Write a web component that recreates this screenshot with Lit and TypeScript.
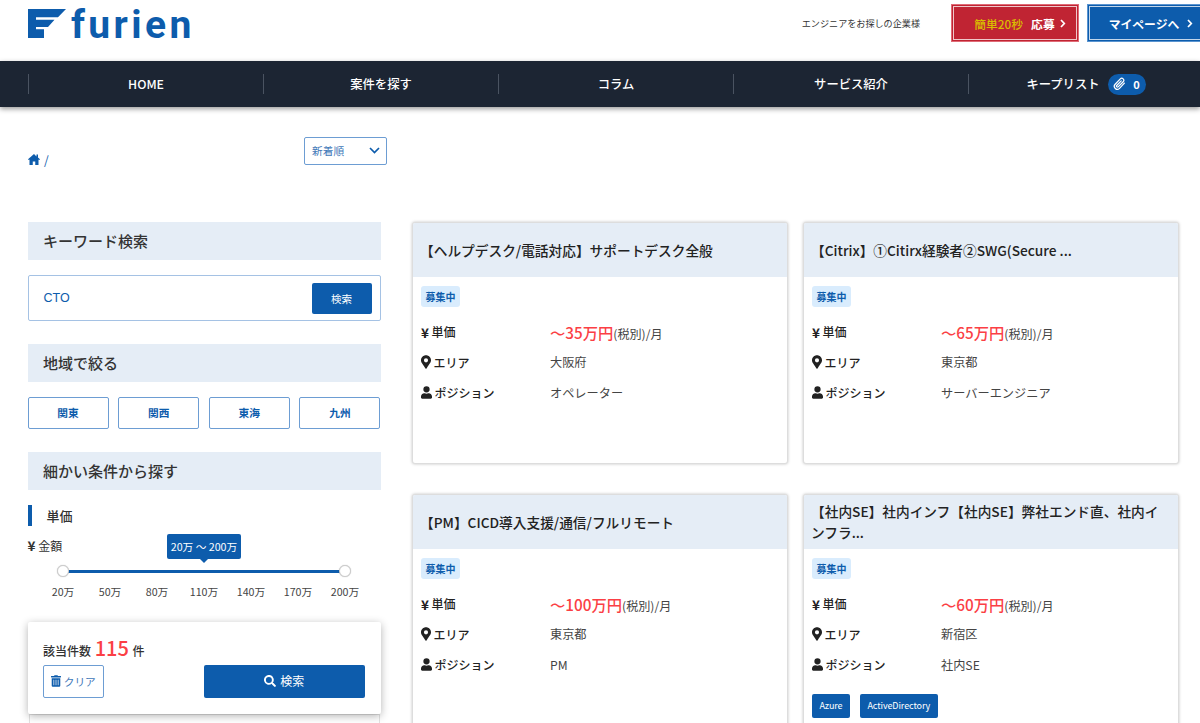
import { LitElement, html, css } from "lit";
import { customElement } from "lit/decorators.js";

const pin = html`<svg class="ic" viewBox="0 0 384 512" width="10" height="14"><path fill="currentColor" d="M172 502C27 291 0 266 0 192 0 86 86 0 192 0s192 86 192 192c0 74-27 99-172 310-10 14-30 14-40 0zm20-230a80 80 0 1 0 0-160 80 80 0 0 0 0 160z"/></svg>`;
const user = html`<svg class="ic" viewBox="0 0 448 512" width="11" height="13"><path fill="currentColor" d="M224 256a128 128 0 1 0 0-256 128 128 0 0 0 0 256zm90 32h-17a174 174 0 0 1-146 0h-17C60 288 0 348 0 422v42c0 26 22 48 48 48h352c26 0 48-22 48-48v-42c0-74-60-134-134-134z"/></svg>`;
const clip = html`<svg viewBox="0 0 24 24" width="13" height="14" fill="none" stroke="#fff" stroke-width="2.3" stroke-linecap="round"><path d="M21 10.5l-9 9.5a5.5 5.5 0 0 1-8-7.6l9.5-9.8a3.7 3.7 0 0 1 5.3 5.2l-9.3 9.6a1.8 1.8 0 0 1-2.6-2.6l8.3-8.6"/></svg>`;
const trash = html`<svg viewBox="0 0 448 512" width="10" height="12"><path fill="currentColor" d="M32 464a48 48 0 0 0 48 48h288a48 48 0 0 0 48-48V128H32zm272-256a16 16 0 0 1 32 0v224a16 16 0 0 1-32 0zm-96 0a16 16 0 0 1 32 0v224a16 16 0 0 1-32 0zm-96 0a16 16 0 0 1 32 0v224a16 16 0 0 1-32 0zM432 32H312l-9-19a24 24 0 0 0-22-13H167a24 24 0 0 0-21 13l-9 19H16A16 16 0 0 0 0 48v32a16 16 0 0 0 16 16h416a16 16 0 0 0 16-16V48a16 16 0 0 0-16-16z"/></svg>`;
const search = html`<svg viewBox="0 0 512 512" width="12" height="12"><path fill="currentColor" d="M505 443l-100-100c-4-4-11-7-17-7h-16a208 208 0 1 0-36 36v16c0 6 3 13 7 17l100 100c9 9 24 9 34 0l28-28c9-10 9-25 0-34zM208 336a128 128 0 1 1 0-256 128 128 0 0 1 0 256z"/></svg>`;
const home = html`<svg viewBox="0 0 24 22" width="12" height="11"><path fill="currentColor" d="M12 0L0 10.5l1.4 1.6L3 10.8V22h6.5v-7h5v7H21V10.8l1.6 1.3 1.4-1.6-4-3.5V1h-3v3.8z"/></svg>`;
const chev = html`<svg class="chev" width="6" height="9" viewBox="0 0 6 9" fill="none" stroke="#fff" stroke-width="1.7"><path d="M1 1l3.3 3.5L1 8"/></svg>`;

interface Job { title: string; price: string; area: string; pos: string; tags?: string[]; }
const jobs: Job[] = [
  { title: "【ヘルプデスク/電話対応】サポートデスク全般", price: "〜35万円", area: "大阪府", pos: "オペレーター" },
  { title: "【Citrix】①Citirx経験者②SWG(Secure ...", price: "〜65万円", area: "東京都", pos: "サーバーエンジニア" },
  { title: "【PM】CICD導入支援/通信/フルリモート", price: "〜100万円", area: "東京都", pos: "PM" },
  { title: "【社内SE】社内インフ【社内SE】弊社エンド直、社内インフラ...", price: "〜60万円", area: "新宿区", pos: "社内SE", tags: ["Azure", "ActiveDirectory"] },
];

@customElement("app-root")
export class AppRoot extends LitElement {
  static styles = css`
    :host { display: block; width: 1200px; height: 723px; overflow: hidden; background: #fff; color: #333;
      font-family: "Noto Sans CJK JP", "Noto Sans", sans-serif; }
    * { box-sizing: border-box; }
    .top { height: 61px; display: flex; align-items: flex-start; padding-left: 28px; }
    .logo { display: flex; align-items: flex-start; margin-top: 3px; height: 40px; }
    .logo svg { margin-top: 6px; flex: none; }
    .logo span { font-family: Roboto, sans-serif; font-weight: 700; font-size: 39px; line-height: 40px; letter-spacing: 3.4px; color: #0d5cac; margin-left: 5px; margin-top: 2px; }
    .find { margin-left: auto; font-size: 9.1px; color: #333; margin-top: 16px; line-height: 14px; }
    .cta { height: 38px; margin-top: 4px; border: 1px solid; display: flex; align-items: center; justify-content: center; font-size: 11.8px; font-weight: 700; color: #fff; position: relative; padding: 2px; }
    .cta i { position: absolute; inset: 1px; border: 1px solid rgba(255,255,255,.75); }
    .red { width: 128px; margin-left: 31px; background: #c02433; border-color: #e06a76; padding-left: 12px; }
    .red b { color: #d9bd00; margin-right: 8px; font-weight: 500; }
    .red .chev { margin-left: 5px; }
    .blue { width: 122px; margin-left: 8px; margin-right: -9px; background: #0d5cac; border-color: #5a94d0; padding-left: 8px; }
    .chev { margin-left: 8px; flex: none; }

    nav { height: 46px; background: #1c2533; padding-left: 28px; display: grid; grid-template-columns: repeat(5, 235px); align-items: center; box-shadow: 0 2px 5px rgba(0,0,0,.4); position: relative; }
    nav a { height: 20px; border-left: 1px solid #4a5361; display: flex; align-items: center; justify-content: center; gap: 8px; color: #fff; font-size: 12.3px; font-weight: 500; }
    .pill { width: 38px; height: 21px; border-radius: 11px; background: #0d5cac; display: flex; align-items: center; justify-content: center; gap: 7px; font-size: 11px; font-weight: 700; }

    .bar { height: 115px; padding: 30px 0 0 28px; display: flex; align-items: flex-start; }
    .crumb { width: 276px; margin-top: 14px; display: flex; align-items: center; gap: 4px; height: 16px; color: #0d5cac; font-size: 12px; }
    .select { width: 83px; height: 28px; border: 1px solid #6d9dd3; border-radius: 2px; display: flex; align-items: center; justify-content: space-between; padding: 0 6px 2px 7px; font-size: 10.7px; color: #3f78b8; }

    .main { display: flex; padding-left: 27.5px; align-items: flex-start; }
    .side { width: 353px; flex: none; }
    h2 { margin: 0; height: 38px; background: #e5edf6; padding: 0 0 2px 15.5px; display: flex; align-items: center; font-size: 15px; font-weight: 500; color: #333; }
    .kw { margin: 15px 0 23px; height: 46px; border: 1px solid #a5c2e4; border-radius: 2px; display: flex; align-items: center; justify-content: space-between; padding: 0 8px 0 15px; font-size: 12.5px; color: #0d5cac; font-family: "Liberation Sans", sans-serif; }
    .kw button, .go { background: #0d5cac; color: #fff; border: 0; border-radius: 2px; font-family: "Noto Sans CJK JP", sans-serif; display: flex; align-items: center; justify-content: center; }
    .kw button { width: 60px; height: 31px; font-size: 10.5px; padding: 0; }
    .regions { display: grid; grid-template-columns: repeat(4, 81px); justify-content: space-between; margin: 15px 0 23px; }
    .regions div { height: 32px; border: 1px solid #6d9dd3; border-radius: 2px; display: flex; align-items: center; justify-content: center; color: #0d5cac; font-size: 10.7px; font-weight: 700; padding-bottom: 2px; }
    .sub { margin-top: 15px; height: 21px; border-left: 4px solid #0d5cac; padding-left: 15px; display: flex; align-items: center; font-size: 13px; font-weight: 500; color: #333; }
    .amount { height: 64px; position: relative; margin-top: 11px; }
    .amt { font-size: 12px; line-height: 16px; color: #333; display: block; }
    .yen { font-size: 13.5px; font-weight: 700; }
    .tip { position: absolute; left: 139.5px; top: -3px; width: 74px; height: 25px; background: #0d5cac; color: #fff; border-radius: 2px; font-size: 10.7px; display: flex; align-items: center; justify-content: center; }
    .tip::after { content: ""; position: absolute; left: 33px; bottom: -4px; border: 4px solid transparent; border-bottom: 0; border-top-color: #0d5cac; }
    .track { position: absolute; left: 35px; width: 282px; top: 33px; height: 3px; background: #0d5cac; }
    .knob { position: absolute; top: -5px; width: 12px; height: 12px; border-radius: 50%; background: #fff; border: 1px solid #ccc; box-shadow: 0 0 1px rgba(0,0,0,.3); }
    .ticks { display: grid; grid-template-columns: repeat(7, 47px); position: absolute; left: 12px; top: 47px; font-size: 10.7px; color: #444; text-align: center; line-height: 16px; }
    .panel { margin-top: 21px; height: 92px; background: #fff; border-radius: 2px; box-shadow: 0 2px 8px rgba(0,0,0,.3); padding: 14px 15.5px 0; position: relative; }
    .count { font-size: 12px; line-height: 23px; height: 29px; color: #333; font-weight: 500; }
    .count b { color: #fb3f45; font-size: 20px; font-weight: 500; margin: 0 1px; }
    .acts { display: flex; justify-content: space-between; }
    .clear { width: 60.5px; height: 33px; border: 1px solid #6d9dd3; border-radius: 2px; display: flex; align-items: center; justify-content: center; gap: 3px; color: #3f78b8; font-size: 10.7px; padding-bottom: 1px; }
    .clear svg { color: #0d5cac; }
    .go { width: 161.5px; height: 33px; font-size: 12px; gap: 4px; padding: 0 0 2px; }
    .rest { height: 20px; margin: 0 1px; border: 1px solid #e2e2e2; }

    .cards { margin-left: 31.5px; display: grid; grid-template-columns: 376px 376px; column-gap: 15px; row-gap: 30px; grid-auto-rows: 242px; }
    .card { border-radius: 3px; border: 1px solid #ddd; box-shadow: 0 0 3px rgba(0,0,0,.25); overflow: hidden; background: #fff; }
    .head { height: 54px; background: #e5edf6; display: flex; align-items: center; padding: 0 8px 0 7px; font-size: 13.7px; font-weight: 500; color: #222; line-height: 21px; }
    .body { padding: 9px 8px 0 8px; }
    .badge { display: flex; align-items: center; justify-content: center; width: 39px; height: 21px; background: #d9ecfd; color: #0d5cac; font-size: 10px; font-weight: 700; border-radius: 3px; }
    .row { display: grid; grid-template-columns: 129px 1fr; align-items: center; height: 30.5px; font-size: 12.2px; color: #444; }
    .row.first { margin-top: 9.5px; }
    .row .k { display: flex; align-items: center; gap: 2.5px; font-weight: 500; color: #222; font-size: 12px; }
    .price { color: #fb3f45; font-size: 15.3px; font-weight: 500; }
    .tax { font-size: 12.1px; }
    .ic { flex: none; }
    .tags { display: flex; gap: 10px; margin-top: 13.5px; }
    .tags span { height: 24px; padding: 0 7.5px; background: #0d5cac; color: #fff; border-radius: 2px; font-size: 9px; letter-spacing: -0.1px; display: flex; align-items: center; }
  `;

  render() {
    return html`
      <div class="top">
        <div class="logo">
          <svg width="38" height="29" viewBox="0 0 38 29"><path fill="#0d5cac" d="M0 0H38L30 8.3H8V10.8H26.5L20 18H8V20.2H16V29H0Z"/></svg>
          <span>furien</span>
        </div>
        <div class="find">エンジニアをお探しの企業様</div>
        <div class="cta red"><i></i><b>簡単20秒</b>応募${chev}</div>
        <div class="cta blue"><i></i>マイページへ${chev}</div>
      </div>
      <nav>
        <a>HOME</a><a>案件を探す</a><a>コラム</a><a>サービス紹介</a>
        <a><span>キープリスト</span><span class="pill">${clip}<span>0</span></span></a>
      </nav>
      <div class="bar">
        <div class="crumb">${home}<span>/</span></div>
        <div class="select"><span>新着順</span>
          <svg width="11" height="7" viewBox="0 0 11 7" fill="none" stroke="#0d5cac" stroke-width="1.7"><path d="M1 1l4.5 4.5L10 1"/></svg>
        </div>
      </div>
      <div class="main">
        <div class="side">
          <h2>キーワード検索</h2>
          <div class="kw"><span>CTO</span><button>検索</button></div>
          <h2>地域で絞る</h2>
          <div class="regions"><div>関東</div><div>関西</div><div>東海</div><div>九州</div></div>
          <h2>細かい条件から探す</h2>
          <div class="sub">単価</div>
          <div class="amount">
            <span class="amt"><span class="yen">¥</span> 金額</span>
            <div class="tip">20万 〜 200万</div>
            <div class="track"><div class="knob" style="left:-6px"></div><div class="knob" style="right:-6px"></div></div>
            <div class="ticks"><span>20万</span><span>50万</span><span>80万</span><span>110万</span><span>140万</span><span>170万</span><span>200万</span></div>
          </div>
          <div class="panel">
            <div class="count">該当件数 <b>115</b> 件</div>
            <div class="acts">
              <div class="clear">${trash}<span>クリア</span></div>
              <button class="go">${search}<span>検索</span></button>
            </div>
          </div>
          <div class="rest"></div>
        </div>
        <div class="cards">
          ${jobs.map((j) => html`
            <div class="card">
              <div class="head"><span>${j.title}</span></div>
              <div class="body">
                <span class="badge">募集中</span>
                <div class="row first"><span class="k"><span class="yen">¥</span>単価</span><span><span class="price">${j.price}</span><span class="tax">(税別)/月</span></span></div>
                <div class="row"><span class="k">${pin}エリア</span><span>${j.area}</span></div>
                <div class="row"><span class="k">${user}ポジション</span><span>${j.pos}</span></div>
                ${j.tags ? html`<div class="tags">${j.tags.map((t) => html`<span>${t}</span>`)}</div>` : ""}
              </div>
            </div>`)}
        </div>
      </div>
    `;
  }
}
